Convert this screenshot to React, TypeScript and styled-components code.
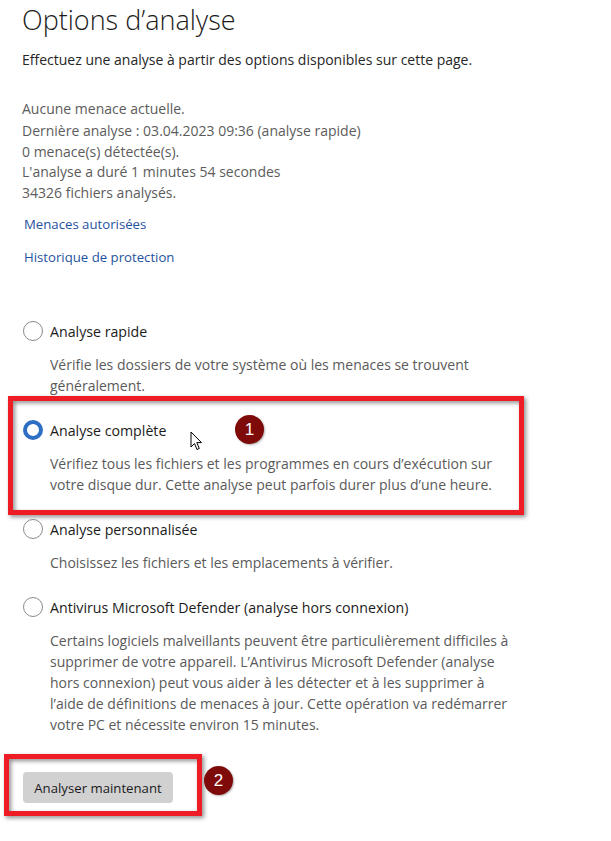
import { createGlobalStyle } from "styled-components";
import styled from "styled-components";

const GlobalStyle = createGlobalStyle`
  html, body {
    margin: 0;
    padding: 0;
    background: #ffffff;
  }
  body {
    font-family: "Open Sans", "Noto Sans", "Liberation Sans", sans-serif;
    color: #1b1b1b;
  }
`;

// STYLED COMPONENTS
const Page = styled.div`
  width: 611px;
  min-height: 841px;
  box-sizing: border-box;
  padding: 0 0 0 22px;
  display: flex;
  flex-direction: column;
`;

const Title = styled.h1`
  margin: 0;
  font-size: 27px;
  font-weight: 300;
  line-height: 40px;
  color: #1b1b1b;
`;

const Intro = styled.p`
  margin: 10px 0 0;
  font-size: 14px;
  line-height: 20px;
  color: #262626;
`;

const Status = styled.div`
  margin-top: 29px;
  display: flex;
  flex-direction: column;
  font-size: 14px;
  line-height: 20.5px;
  color: #5c5c5c;
`;

const StatusLine = styled.span<{ $spaced?: boolean }>`
  margin-bottom: ${(p) => (p.$spaced ? "1.5px" : "0")};
`;

const LinkList = styled.div`
  margin-top: 11px;
  display: flex;
  flex-direction: column;
  gap: 13px;
  padding-left: 2px;
`;

const TextLink = styled.a`
  font-size: 13.2px;
  line-height: 20px;
  color: #1f52a0;
  text-decoration: none;
`;

const Options = styled.div`
  margin-top: 54px;
  display: flex;
  flex-direction: column;
  gap: 24px;
`;

const OptionBlock = styled.div`
  position: relative;
  display: flex;
  flex-direction: column;
`;

const OptionRow = styled.label`
  display: flex;
  align-items: center;
  gap: 7px;
  height: 20px;
  padding-left: 1px;
  font-size: 14.2px;
  color: #1b1b1b;
`;

const Radio = styled.span<{ $checked?: boolean }>`
  box-sizing: border-box;
  width: 20px;
  height: 20px;
  border-radius: 50%;
  background: #fff;
  border: ${(p) => (p.$checked ? "4px solid #2f6fc3" : "1px solid #8a8a8a")};
`;

const Description = styled.p`
  margin: 13px 0 0;
  padding-left: 28px;
  max-width: 470px;
  font-size: 14px;
  line-height: 21px;
  color: #5a5a5a;
`;

const Frame = styled.div<{ $top: number; $left: number; $w: number; $h: number }>`
  position: absolute;
  top: ${(p) => p.$top}px;
  left: ${(p) => p.$left}px;
  width: ${(p) => p.$w}px;
  height: ${(p) => p.$h}px;
  box-sizing: border-box;
  border: 5px solid #ee1c24;
  filter: drop-shadow(2px 2px 2px rgba(0, 0, 0, 0.45));
  pointer-events: none;
`;

const Badge = styled.span<{ $top: number; $left: number }>`
  position: absolute;
  top: ${(p) => p.$top}px;
  left: ${(p) => p.$left}px;
  width: 29px;
  height: 29px;
  border-radius: 50%;
  background: #7e0a0a;
  color: #fff;
  display: flex;
  align-items: center;
  justify-content: center;
  font-family: "Liberation Sans", Arial, sans-serif;
  font-size: 17px;
  box-shadow: 1px 1px 2px rgba(0, 0, 0, 0.3);
`;

const Cursor = styled.svg`
  position: absolute;
  top: 11px;
  left: 168px;
`;

const ButtonArea = styled.div`
  position: relative;
  margin-top: 37px;
  display: flex;
`;

const PrimaryButton = styled.button`
  margin-left: 1px;
  width: 150px;
  height: 31px;
  border: none;
  border-radius: 4px;
  background: #d1d1d1;
  font-family: inherit;
  font-size: 13.2px;
  color: #1b1b1b;
  padding: 0;
`;

// =============================================================
type ScanOption = {
  label: string;
  description: string;
  checked?: boolean;
  annotated?: boolean;
};

const options: ScanOption[] = [
  {
    label: "Analyse rapide",
    description:
      "Vérifie les dossiers de votre système où les menaces se trouvent généralement.",
  },
  {
    label: "Analyse complète",
    description:
      "Vérifiez tous les fichiers et les programmes en cours d’exécution sur votre disque dur. Cette analyse peut parfois durer plus d’une heure.",
    checked: true,
    annotated: true,
  },
  {
    label: "Analyse personnalisée",
    description: "Choisissez les fichiers et les emplacements à vérifier.",
  },
  {
    label: "Antivirus Microsoft Defender (analyse hors connexion)",
    description:
      "Certains logiciels malveillants peuvent être particulièrement difficiles à supprimer de votre appareil. L’Antivirus Microsoft Defender (analyse hors connexion) peut vous aider à les détecter et à les supprimer à l’aide de définitions de menaces à jour. Cette opération va redémarrer votre PC et nécessite environ 15 minutes.",
  },
];
// =============================================================

function PointerCursor() {
  return (
    <Cursor width="13" height="20" viewBox="0 0 13 20">
      <path
        d="M1 1 L1 16 L4.5 12.5 L7 18.5 L9.3 17.5 L6.8 11.6 L11.5 11.6 Z"
        fill="#fff"
        stroke="#000"
        strokeWidth="1"
        strokeLinejoin="round"
      />
    </Cursor>
  );
}

export default function App() {
  return (
    <>
      <GlobalStyle />
      <Page>
        <Title>Options d’analyse</Title>
        <Intro>Effectuez une analyse à partir des options disponibles sur cette page.</Intro>

        <Status>
          <StatusLine $spaced>Aucune menace actuelle.</StatusLine>
          <StatusLine>Dernière analyse : 03.04.2023 09:36 (analyse rapide)</StatusLine>
          <StatusLine>0 menace(s) détectée(s).</StatusLine>
          <StatusLine>L'analyse a duré 1 minutes 54 secondes</StatusLine>
          <StatusLine>34326 fichiers analysés.</StatusLine>
        </Status>

        <LinkList>
          <TextLink href="#">Menaces autorisées</TextLink>
          <TextLink href="#">Historique de protection</TextLink>
        </LinkList>

        <Options>
          {options.map((opt) => (
            <OptionBlock key={opt.label}>
              <OptionRow>
                <Radio $checked={opt.checked} />
                {opt.label}
              </OptionRow>
              <Description>{opt.description}</Description>
              {opt.annotated && (
                <>
                  <Frame $top={-24} $left={-14} $w={516} $h={119} />
                  <Badge $top={-5} $left={213}>1</Badge>
                  <PointerCursor />
                </>
              )}
            </OptionBlock>
          ))}
        </Options>

        <ButtonArea>
          <PrimaryButton>Analyser maintenant</PrimaryButton>
          <Frame $top={-18} $left={-18} $w={198} $h={62} />
          <Badge $top={-6} $left={182}>2</Badge>
        </ButtonArea>
      </Page>
    </>
  );
}
